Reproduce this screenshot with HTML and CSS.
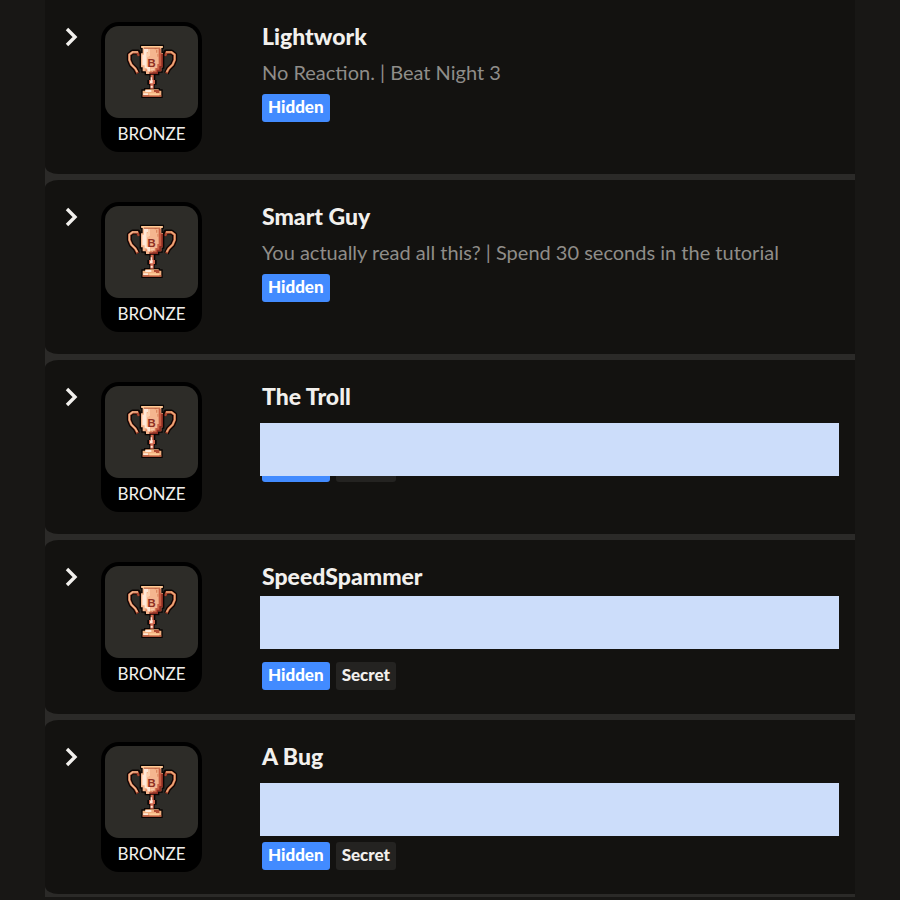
FILE: index.html
```
<!DOCTYPE html>
<html lang="en">
<head>
    <meta charset="UTF-8">
    <meta name="viewport" content="width=device-width, initial-scale=1.0">
    <title>Achievements</title>
    <link rel="stylesheet" href="styles.css">
</head>
<body>
    <!-- Shared icons -->
    <svg class="sprite" aria-hidden="true">
        <symbol id="chevron" viewBox="0 0 14 20">
            <path d="M2 2 L10 10 L2 18" fill="none" stroke="currentColor" stroke-width="3.4"/>
        </symbol>
        <symbol id="trophy" viewBox="0 0 192 204">
            <!-- Handles -->
            <g fill="none" stroke-linejoin="round">
                <path d="M60 58 L54 48 H38 L28 56 V72 L34 86 L46 98 L53 112" stroke="#0b0503" stroke-width="15"/>
                <path d="M132 58 L138 48 H154 L164 56 V72 L158 86 L146 98 L139 112" stroke="#0b0503" stroke-width="15"/>
                <path d="M57 60 L52 49 H38 L28 56 V72 L34 86 L46 98 L53 112" stroke="#a9452f" stroke-width="8"/>
                <path d="M135 60 L140 49 H154 L164 56 V72 L158 86 L146 98 L139 112" stroke="#a9452f" stroke-width="8"/>
                <path d="M54 48 H38 L28 56 V72 L34 86 L46 98 L52 108" stroke="#f3b78b" stroke-width="5"/>
                <path d="M138 48 H154 L164 56 V72 L158 86 L146 98 L140 108" stroke="#eda877" stroke-width="5"/>
            </g>
            <!-- Outline -->
            <path d="M60 26 H132 V38 H128 V50 H133 V98 H128 V110 H118 V118 H106 V132 H110 V146 H104 V156 H120 V160 H128 V186 H64 V160 H72 V156 H88 V146 H82 V132 H88 V118 H74 V110 H64 V98 H59 V50 H64 V38 H60 Z" fill="#0b0503"/>
            <!-- Cup -->
            <path d="M64 30 H128 V36 H124 V52 H129 V94 H124 V106 H114 V114 H78 V106 H68 V94 H63 V52 H68 V36 H64 Z" fill="#f4b68f"/>
            <path d="M72 38 H84 V48 H80 V96 H74 V88 H67 V56 H72 Z M80 92 H90 V106 H80 Z" fill="#ffe9d9"/>
            <path d="M84 40 H90 V60 H86 V64 H80 V52 H84 Z M92 98 H102 V103 H92 Z" fill="#fbd0ae"/>
            <path d="M116 38 H122 V52 H127 V92 H120 V102 H112 V110 H98 V104 H106 V96 H112 V84 H116 Z" fill="#c95f43"/>
            <path d="M124 54 H129 V94 H124 V106 H114 V114 H88 V109 H110 V101 H118 V90 H124 Z" fill="#8e2d23"/>
            <path d="M108 42 H112 V50 H108 Z M112 54 H116 V62 H112 Z M104 36 H110 V40 H104 Z M76 100 H82 V106 H76 Z M90 105 H96 V109 H90 Z" fill="#df8a62"/>
            <path d="M64 30 H128 V35 H64 Z" fill="#ffc993"/>
            <path d="M72 35 H120 V38 H72 Z" fill="#b85a3b"/>
            <!-- Stem -->
            <path d="M92 116 H101 V132 H105 V144 H101 V158 H91 V144 H87 V132 H92 Z" fill="#d66a50"/>
            <path d="M92 124 H96 V132 H98 V142 H90 V134 H92 Z M92 149 H98 V155 H92 Z" fill="#ffe9d9"/>
            <!-- Base -->
            <path d="M76 160 H116 V164 H124 V182 H68 V164 H76 Z" fill="#f4b07f"/>
            <path d="M76 162 H94 V168 H76 Z M70 172 H84 V178 H70 Z" fill="#ffe9d9"/>
            <path d="M102 162 H118 V172 H108 V168 H102 Z M68 178 H124 V182 H68 Z" fill="#b34e36"/>
            <path d="M88 172 H118 V178 H88 Z" fill="#ffcf9b"/>
        </symbol>
    </svg>

    <ul class="achievements">
        <li class="achievement">
            <button class="expand-btn" type="button" aria-label="Expand Lightwork"><svg><use href="#chevron"/></svg></button>
            <div class="tier">
                <div class="tier-icon">
                    <svg viewBox="0 0 192 204"><use href="#trophy"/><text class="trophy-letter" x="95" y="92">B</text></svg>
                </div>
                <span class="tier-name">BRONZE</span>
            </div>
            <div class="info">
                <h2 class="title">Lightwork</h2>
                <p class="description">No Reaction. | Beat Night 3</p>
                <div class="tags">
                    <span class="tag tag-hidden">Hidden</span>
                </div>
            </div>
        </li>

        <li class="achievement">
            <button class="expand-btn" type="button" aria-label="Expand Smart Guy"><svg><use href="#chevron"/></svg></button>
            <div class="tier">
                <div class="tier-icon">
                    <svg viewBox="0 0 192 204"><use href="#trophy"/><text class="trophy-letter" x="95" y="92">B</text></svg>
                </div>
                <span class="tier-name">BRONZE</span>
            </div>
            <div class="info">
                <h2 class="title">Smart Guy</h2>
                <p class="description">You actually read all this? | Spend 30 seconds in the tutorial</p>
                <div class="tags">
                    <span class="tag tag-hidden">Hidden</span>
                </div>
            </div>
        </li>

        <li class="achievement">
            <button class="expand-btn" type="button" aria-label="Expand The Troll"><svg><use href="#chevron"/></svg></button>
            <div class="tier">
                <div class="tier-icon">
                    <svg viewBox="0 0 192 204"><use href="#trophy"/><text class="trophy-letter" x="95" y="92">B</text></svg>
                </div>
                <span class="tier-name">BRONZE</span>
            </div>
            <div class="info">
                <h2 class="title">The Troll</h2>
                <p class="description"></p>
                <div class="tags">
                    <span class="tag tag-hidden">Hidden</span>
                    <span class="tag tag-secret">Secret</span>
                </div>
                <div class="cover"></div>
            </div>
        </li>

        <li class="achievement">
            <button class="expand-btn" type="button" aria-label="Expand SpeedSpammer"><svg><use href="#chevron"/></svg></button>
            <div class="tier">
                <div class="tier-icon">
                    <svg viewBox="0 0 192 204"><use href="#trophy"/><text class="trophy-letter" x="95" y="92">B</text></svg>
                </div>
                <span class="tier-name">BRONZE</span>
            </div>
            <div class="info">
                <h2 class="title">SpeedSpammer</h2>
                <p class="description two-lines"></p>
                <div class="tags">
                    <span class="tag tag-hidden">Hidden</span>
                    <span class="tag tag-secret">Secret</span>
                </div>
                <div class="cover cover-high"></div>
            </div>
        </li>

        <li class="achievement">
            <button class="expand-btn" type="button" aria-label="Expand A Bug"><svg><use href="#chevron"/></svg></button>
            <div class="tier">
                <div class="tier-icon">
                    <svg viewBox="0 0 192 204"><use href="#trophy"/><text class="trophy-letter" x="95" y="92">B</text></svg>
                </div>
                <span class="tier-name">BRONZE</span>
            </div>
            <div class="info">
                <h2 class="title">A Bug</h2>
                <p class="description two-lines"></p>
                <div class="tags">
                    <span class="tag tag-hidden">Hidden</span>
                    <span class="tag tag-secret">Secret</span>
                </div>
                <div class="cover"></div>
            </div>
        </li>
    </ul>
</body>
</html>
```
FILE: styles.css
```
* {
    margin: 0;
    padding: 0;
    box-sizing: border-box;
}

body {
    font-family: Lato, "Liberation Sans", sans-serif;
    background-color: #181715;
    color: #f2f0ed;
    padding: 0 5%;
}

.sprite {
    position: absolute;
    width: 0;
    height: 0;
}

/* The gaps between the cards show the list background */
.achievements {
    list-style: none;
    display: flex;
    flex-direction: column;
    gap: 6px;
    padding-bottom: 3px;
    background-color: #2b2a28;
}

.achievement {
    display: flex;
    align-items: flex-start;
    padding: 22px 16px 22px 20px;
    background-color: #131210;
    border-radius: 14px 0 0 14px / 8px 0 0 8px;
}

.achievement:first-child {
    border-top-left-radius: 0;
}

.expand-btn {
    width: 14px;
    height: 20px;
    margin: 5px 22px 0 0;
    background: none;
    border: none;
    color: #f2f0ed;
    cursor: pointer;
}

.expand-btn svg {
    display: block;
    width: 14px;
    height: 20px;
}

/* Trophy tile */
.tier {
    width: 101px;
    flex-shrink: 0;
    margin-right: 60px;
    padding: 4px;
    background-color: #000;
    border-radius: 18px;
    text-align: center;
}

.tier-icon {
    display: flex;
    justify-content: center;
    align-items: center;
    height: 92px;
    padding-bottom: 4px;
    background-color: #2d2c28;
    border-radius: 14px;
}

.tier-icon svg {
    width: 64px;
    height: 68px;
}

.trophy-letter {
    font-family: "Liberation Sans", sans-serif;
    font-size: 34px;
    font-weight: 700;
    text-anchor: middle;
    fill: #8e2f22;
}

.tier-name {
    display: block;
    padding-top: 2px;
    font-size: 17px;
    line-height: 28px;
}

/* Text column */
.info {
    position: relative;
    flex: 1;
    min-width: 0;
}

.title {
    font-size: 23px;
    line-height: 28px;
    font-weight: 900;
}

.description {
    min-height: 28px;
    margin-top: 8px;
    font-size: 20px;
    line-height: 28px;
    color: #8f8d89;
}

.description.two-lines {
    min-height: 56px;
}

.tags {
    display: flex;
    gap: 6px;
    margin-top: 8px;
}

.tag {
    height: 28px;
    padding: 0 6px;
    border-radius: 3px;
    font-size: 17px;
    line-height: 25px;
    font-weight: 900;
}

.tag-hidden {
    background-color: #428bff;
    color: #fff;
}

.tag-secret {
    background-color: #242321;
}

/* Spoiler cover */
.cover {
    position: absolute;
    top: 41px;
    left: -2px;
    right: 0;
    height: 53px;
    background-color: #ccddfa;
}

.cover-high {
    top: 34px;
}
```
